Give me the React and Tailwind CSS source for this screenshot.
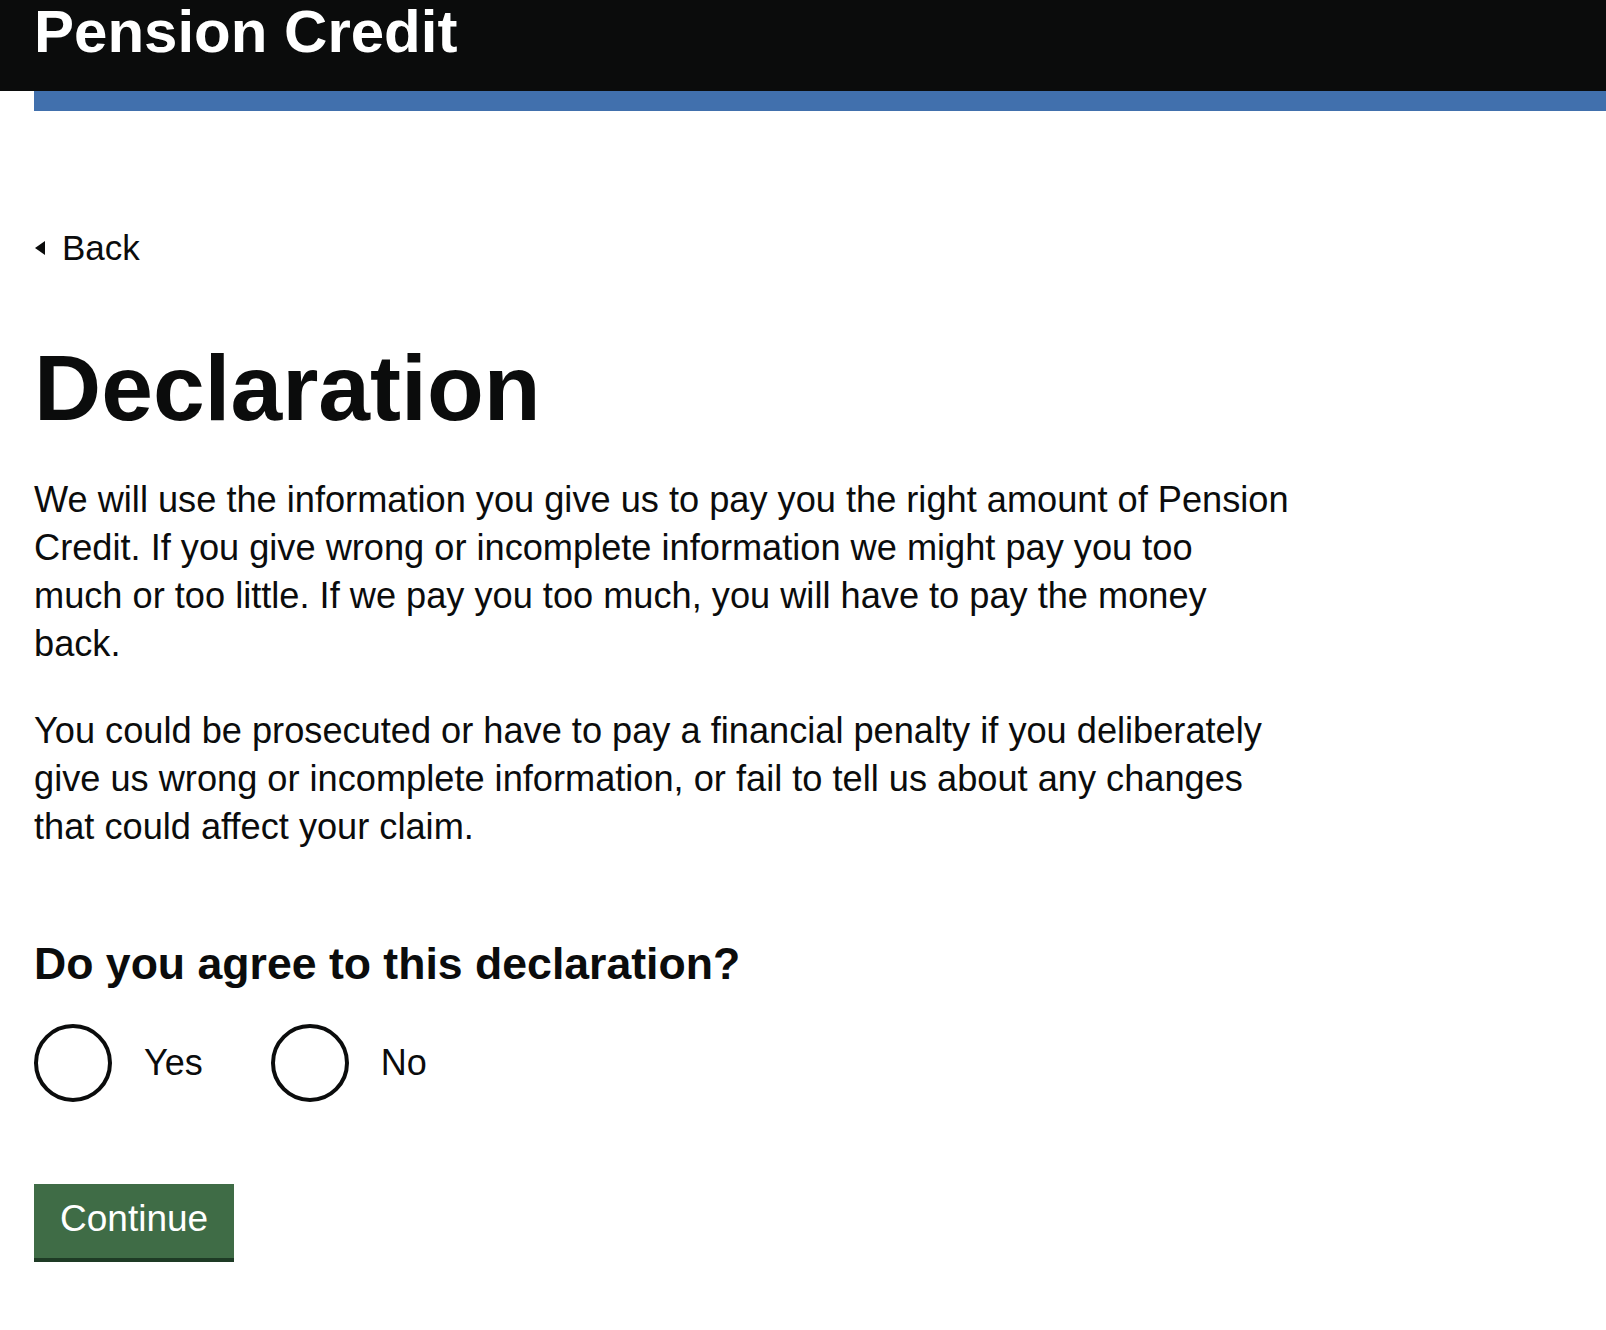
import { useState } from 'react';

const font = { fontFamily: '"Liberation Sans", Arial, sans-serif' };

function Radio({ label, checked, onChange }) {
  return (
    <label className="flex items-center cursor-pointer">
      <span className="flex h-[78px] w-[78px] items-center justify-center rounded-full border-4 border-[#0b0c0c] bg-white">
        {checked && <span className="h-[40px] w-[40px] rounded-full bg-[#0b0c0c]" />}
      </span>
      <input type="radio" className="sr-only" checked={checked} onChange={onChange} />
      <span className="ml-[32px] text-[36px] leading-[48px] text-[#0b0c0c]">{label}</span>
    </label>
  );
}

export default function App() {
  const [answer, setAnswer] = useState(null);

  return (
    <div className="min-h-[1330px] bg-white text-[#0b0c0c]" style={font}>
      <header className="bg-[#0b0c0c]">
        <div className="h-[91px] px-[34px] pt-[2px]">
          <span className="block text-[60px] font-bold leading-none text-white">Pension Credit</span>
        </div>
      </header>
      <div className="ml-[34px] h-[20px] bg-[#4170ad]" />

      <main className="px-[34px]">
        <a href="#" className="mt-[117px] flex h-[40px] items-center text-[35px] leading-[40px] text-[#0b0c0c]">
          <svg width="11" height="14" viewBox="0 0 11 14" className="ml-[1px] mr-[16px]">
            <path d="M0 7 L10 0 L10 14 Z" fill="#0b0c0c" />
          </svg>
          Back
        </a>

        <h1 className="mt-[70px] text-[93px] font-bold leading-[100px]">Declaration</h1>

        <div className="mt-[38px] w-[1420px] text-[36.2px] leading-[48px]">
          <p>
            We will use the information you give us to pay you the right amount of Pension<br />
            Credit. If you give wrong or incomplete information we might pay you too<br />
            much or too little. If we pay you too much, you will have to pay the money<br />
            back.
          </p>
          <p className="mt-[39px]">
            You could be prosecuted or have to pay a financial penalty if you deliberately<br />
            give us wrong or incomplete information, or fail to tell us about any changes<br />
            that could affect your claim.
          </p>
        </div>

        <fieldset className="mt-[85px]">
          <legend className="text-[44.6px] font-bold leading-[56px]">Do you agree to this declaration?</legend>
          <div className="mt-[32px] flex items-center gap-[68px]">
            <Radio label="Yes" checked={answer === 'yes'} onChange={() => setAnswer('yes')} />
            <Radio label="No" checked={answer === 'no'} onChange={() => setAnswer('no')} />
          </div>
        </fieldset>

        <button className="mt-[82px] h-[74px] bg-[#3f6c46] px-[26px] pb-[4px] text-[37px] leading-[48px] text-white shadow-[0_4px_0_#1e3b25]">
          Continue
        </button>
      </main>
    </div>
  );
}
